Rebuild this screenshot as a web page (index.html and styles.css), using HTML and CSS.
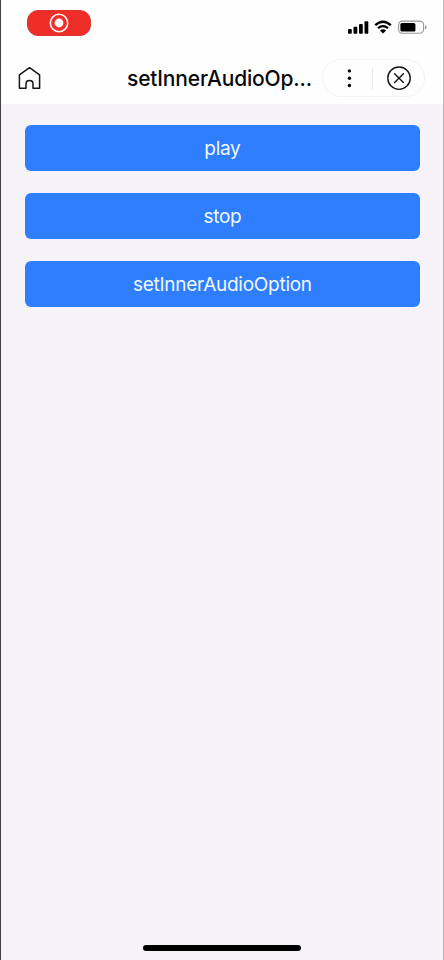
FILE: index.html
```html
<!DOCTYPE html>
<html lang="en">
<head>
<meta charset="utf-8">
<title>setInnerAudioOption</title>
<link rel="stylesheet" href="styles.css">
</head>
<body>
<div class="screen">
  <header class="top">
    <div class="status">
      <div class="recording">
        <svg width="20" height="20" viewBox="0 0 20 20"><circle cx="10" cy="10" r="8.7" fill="none" stroke="#fff" stroke-width="1.5"/><circle cx="10" cy="10" r="4.4" fill="#fff"/></svg>
      </div>
      <div class="indicators">
        <svg class="signal" width="21" height="14" viewBox="0 0 21 14"><rect x="0" y="9" width="3.8" height="4.8" rx="1"/><rect x="5.5" y="6.8" width="3.8" height="7" rx="1"/><rect x="11" y="4.1" width="3.8" height="9.7" rx="1"/><rect x="16.5" y="1.3" width="3.8" height="12.5" rx="1"/></svg>
        <svg class="wifi" width="18" height="14" viewBox="0 0 18 14"><path d="M1.2 5.2Q9-1.8 16.8 5.2M4 8.2Q9 4 14 8.2" fill="none" stroke="#000" stroke-width="2.3"/><path d="M9 13.4 5.9 10.4Q9 8 12.1 10.4Z"/></svg>
        <svg class="battery" width="29" height="14" viewBox="0 0 29 14"><rect x=".6" y="1.1" width="25" height="12.2" rx="3.7" fill="none" stroke="#99999b" stroke-width="1.1"/><rect x="2.4" y="2.9" width="15" height="8.7" rx="1.5"/><path d="M27 4.9Q28.6 5.5 28.6 7.2T27 9.5Z" fill="#99999b"/></svg>
      </div>
    </div>
    <nav class="nav">
      <svg class="home" width="24" height="24" viewBox="0 0 24 24"><path d="M2.4 8.8 12.5 1.7 22.6 8.8V22.2H16V17.9Q16 14.6 12.5 14.6T9 17.9V22.2H2.4Z" fill="none" stroke="#151518" stroke-width="1.5" stroke-linejoin="round"/></svg>
      <h1 class="title">setInnerAudioOp...</h1>
      <div class="capsule">
        <svg class="more" width="6" height="20" viewBox="0 0 6 20"><circle cx="3.4" cy="2.9" r="1.7"/><circle cx="3.4" cy="10.2" r="1.7"/><circle cx="3.4" cy="17.5" r="1.7"/></svg>
        <span class="divider"></span>
        <svg class="close" width="26" height="26" viewBox="0 0 26 26"><g fill="none" stroke="#151518" stroke-width="1.4" stroke-linecap="round"><circle cx="13" cy="13.2" r="11.2"/><path d="m8.6 8.8 8.8 8.8m0-8.8-8.8 8.8"/></g></svg>
      </div>
    </nav>
  </header>
  <main class="actions">
    <button class="action play">play</button>
    <button class="action stop">stop</button>
    <button class="action option">setInnerAudioOption</button>
  </main>
  <div class="home-indicator"></div>
</div>
</body>
</html>
```
FILE: styles.css
```css
* { box-sizing: border-box; }
body { margin: 0; font-family: Inter, "Liberation Sans", sans-serif; }
svg { display: block; flex: none; }
.screen {
  width: 444px;
  height: 960px;
  display: flex;
  flex-direction: column;
  background: #f5f3f7;
  border-left: 1px solid #454146;
  border-right: 1px solid #b8b8ba;
}
.top { height: 104px; background: #fefefe; }
.status { height: 52px; display: flex; justify-content: space-between; padding: 10px 16px 0 26px; }
.recording {
  width: 64px;
  height: 25.5px;
  border-radius: 11px;
  border: 1px solid #d93632;
  background: #f02e29;
  display: flex;
  align-items: center;
  justify-content: center;
}
.indicators { display: flex; padding-top: 10px; height: 24px; }
.wifi { margin-left: 5px; }
.battery { margin-left: 6px; }
.nav { height: 52px; display: flex; align-items: center; padding: 0 18px 0 16px; }
.title {
  width: 190px;
  margin: 2px 0 0 86px;
  font-size: 21px;
  line-height: 28px;
  font-weight: 500;
  letter-spacing: -0.18px;
  color: #09090b;
  white-space: nowrap;
}
.capsule {
  width: 103px;
  height: 38px;
  margin-left: 5px;
  border: 1px solid #f3f3f5;
  border-radius: 19px;
  display: flex;
  flex: none;
  align-items: center;
  padding-left: 23px;
}
.divider { width: 1px; height: 21px; margin-left: 20px; background: #e7e7e9; }
.close { margin-left: 13px; }
.actions { flex: 1; padding: 21.4px 23.5px 0 24.3px; display: flex; flex-direction: column; gap: 21.7px; }
.action {
  height: 46px;
  flex: none;
  padding: 2px 0 0;
  border: 0;
  border-radius: 6px;
  background: #2f7efe;
  color: #eff8ff;
  font: 400 19px/44px Inter, "Liberation Sans", sans-serif;
  letter-spacing: -0.27px;
}
.home-indicator { width: 158px; height: 6px; margin: 0 auto 9px; border-radius: 3px; background: #000; }
```
